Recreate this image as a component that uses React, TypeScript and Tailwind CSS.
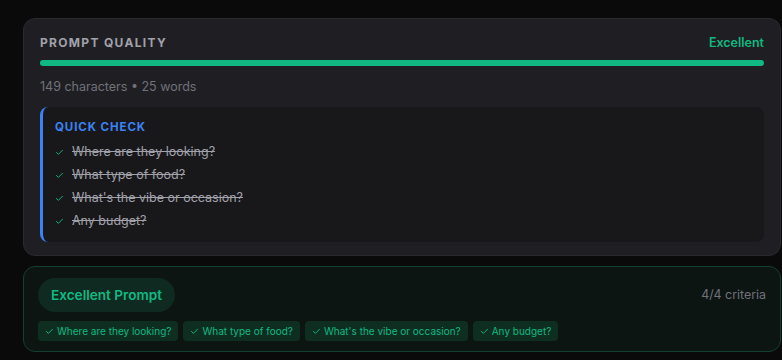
import React from 'react';
import { Check } from 'lucide-react';

const criteria = [
  'Where are they looking?',
  'What type of food?',
  "What's the vibe or occasion?",
  'Any budget?',
];

export default function App() {
  return (
    <div
      className="h-[360px] w-[782px] overflow-hidden bg-[#0a0a0a] pt-[18px] pl-[23px]"
      style={{ fontFamily: 'Inter, "Noto Sans", sans-serif' }}
    >
      <div className="w-[758px] rounded-xl border border-[#2a2a2f] bg-[#1f1f23] px-4 pt-[14px] pb-[13px]">
        <div className="flex h-5 items-center justify-between">
          <span className="text-xs font-bold uppercase tracking-[0.11em] text-[#a1a1aa]">Prompt Quality</span>
          <span className="text-[12.5px] font-semibold text-[#10b981]">Excellent</span>
        </div>
        <div className="mt-[7px] h-1.5 w-full rounded-full bg-[#10b981]" />
        <div className="mt-[11px] text-[12.5px] leading-5 text-[#71717a]">149 characters • 25 words</div>

        <div className="mt-[10px] rounded-lg border-l-[3px] border-[#3b82f6] bg-[#18181b] pl-3 pt-3 pb-[9px]">
          <div className="text-[11.5px] font-bold uppercase leading-4 tracking-[0.08em] text-[#3b82f6]">Quick Check</div>
          <ul className="mt-[6px]">
            {criteria.map((c) => (
              <li key={c} className="flex h-[23px] items-center gap-[8px]">
                <Check size={9} strokeWidth={2.5} className="text-[#10b981]" />
                <span className="text-[12.5px] text-[#a1a1aa] line-through">{c}</span>
              </li>
            ))}
          </ul>
        </div>
      </div>

      <div className="mt-[10px] w-[758px] rounded-xl border border-[#14412e] bg-[#0c1512] px-[14px] pt-[11px] pb-[10px]">
        <div className="flex items-center justify-between">
          <span className="flex h-[34px] items-center rounded-full bg-[#0f2a20] px-[13px] text-[13.6px] font-semibold text-[#10b981]">
            Excellent Prompt
          </span>
          <span className="text-[12.4px] text-[#71717a]">4/4 criteria</span>
        </div>
        <div className="mt-[9px] flex gap-[5px]">
          {criteria.map((c) => (
            <span key={c} className="flex h-5 items-center gap-[3px] rounded bg-[#0f2e22] px-[7px] text-[10px] text-[#10b981]">
              <Check size={9} strokeWidth={2.5} />
              {c}
            </span>
          ))}
        </div>
      </div>
    </div>
  );
}
